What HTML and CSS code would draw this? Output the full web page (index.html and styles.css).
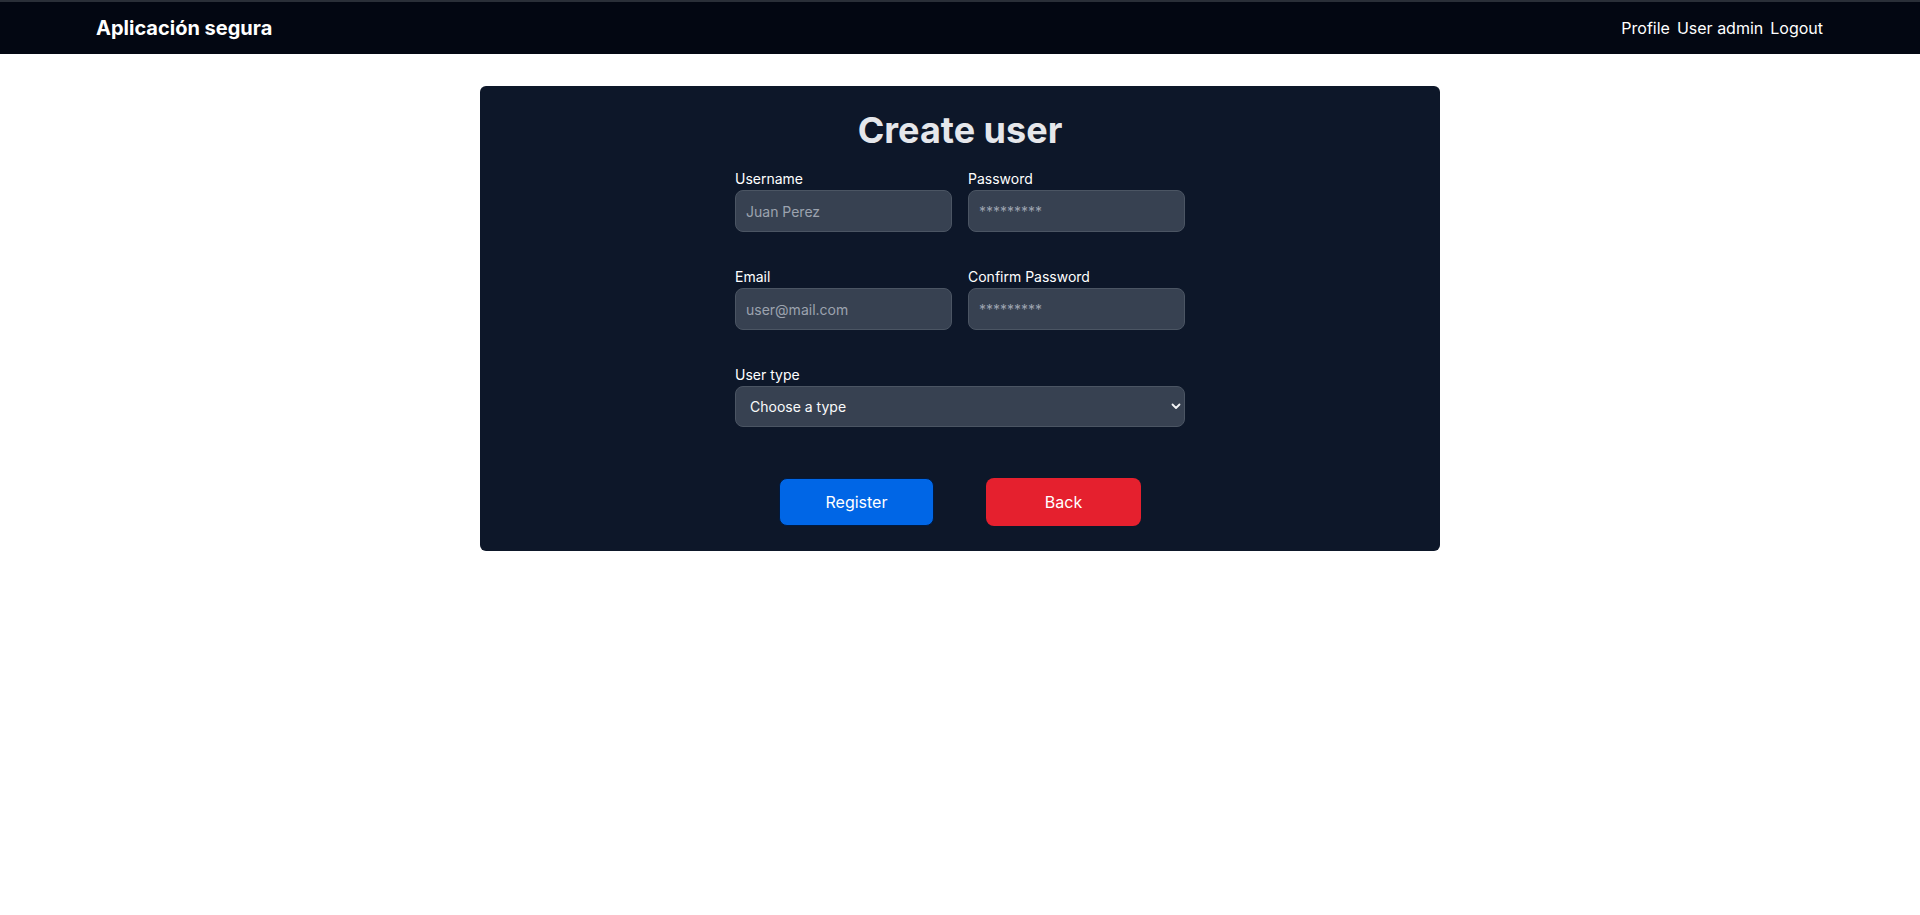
FILE: index.html
```html
<!DOCTYPE html>
<html lang="es">
<head>
<meta charset="utf-8">
<title>Create user</title>
<link rel="stylesheet" href="styles.css">
</head>
<body>
<nav class="navbar">
  <a class="brand" href="#">Aplicación segura</a>
  <div class="nav-links">
    <a href="#">Profile</a>
    <a href="#">User admin</a>
    <a href="#">Logout</a>
  </div>
</nav>
<main class="main">
  <section class="card">
    <h1 class="title">Create user</h1>
    <form class="form">
      <div class="grid">
        <div class="field">
          <label class="label">Username</label>
          <input class="input" type="text" placeholder="Juan Perez">
        </div>
        <div class="field">
          <label class="label">Password</label>
          <input class="input" type="password" placeholder="*********">
        </div>
        <div class="field">
          <label class="label">Email</label>
          <input class="input" type="email" placeholder="user@mail.com">
        </div>
        <div class="field">
          <label class="label">Confirm Password</label>
          <input class="input" type="password" placeholder="*********">
        </div>
        <div class="field full">
          <label class="label">User type</label>
          <div class="select-wrap">
            <select class="select">
              <option>Choose a type</option>
            </select>
            <svg class="chevron" width="10" height="8" viewBox="0 0 10 8"><path d="M1.5 2.5 L5 6 L8.5 2.5" fill="none" stroke="#f3f4f6" stroke-width="1.8" stroke-linecap="round" stroke-linejoin="round"/></svg>
          </div>
        </div>
      </div>
      <div class="actions">
        <button type="button" class="btn btn-blue">Register</button>
        <button type="button" class="btn btn-red">Back</button>
      </div>
    </form>
  </section>
</main>
</body>
</html>
```
FILE: styles.css
```css
* { box-sizing: border-box; }
html, body { margin: 0; padding: 0; }
body {
  font-family: Inter, "Liberation Sans", sans-serif;
  background: #ffffff;
  color: #ffffff;
}
.navbar {
  height: 54px;
  background: #030712;
  border-top: 2px solid #2a2f38;
  display: flex;
  align-items: center;
  justify-content: space-between;
  padding: 0 97px 0 96px;
}
.brand {
  color: #ffffff;
  text-decoration: none;
  font-weight: 700;
  font-size: 20px;
}
.nav-links {
  display: flex;
  gap: 7px;
}
.nav-links a {
  color: #ffffff;
  text-decoration: none;
  font-size: 16px;
}
.main {
  display: flex;
  justify-content: center;
  padding-top: 32px;
}
.card {
  width: 960px;
  background: #0d1729;
  border-radius: 6px;
  padding: 21px 0 25px;
  display: flex;
  flex-direction: column;
  align-items: center;
}
.title {
  margin: 0;
  font-size: 36px;
  line-height: 46px;
  font-weight: 700;
  color: #e5e7eb;
}
.form {
  width: 450px;
  margin-top: 16px;
}
.grid {
  display: grid;
  grid-template-columns: minmax(0, 1fr) minmax(0, 1fr);
  column-gap: 16px;
  row-gap: 35px;
}
.field { display: flex; flex-direction: column; min-width: 0; }
.full { grid-column: 1 / span 2; }
.label {
  font-size: 14px;
  line-height: 20px;
  margin-bottom: 1px;
  color: #ffffff;
}
.input, .select {
  width: 100%;
  height: 42px;
  background: #374151;
  border: 1px solid #4b5563;
  border-radius: 8px;
  color: #ffffff;
  font-family: inherit;
  font-size: 14px;
  padding: 0 10px;
  outline: none;
}
.input::placeholder { color: #9ca3af; }
.select-wrap { position: relative; }
.select {
  height: 41px;
  appearance: none;
  -webkit-appearance: none;
  padding: 0 14px;
  color: #f9fafb;
}
.chevron {
  position: absolute;
  right: 4px;
  top: 16px;
}
.actions {
  display: flex;
  justify-content: center;
  gap: 52px;
  margin-top: 51px;
}
.btn {
  width: 155px;
  height: 48px;
  border: none;
  border-radius: 8px;
  color: #ffffff;
  font-family: inherit;
  font-size: 16px;
  cursor: pointer;
}
.btn-blue { background: #0066e6; border: 1px solid #001a40; }
.btn-red { background: #e5202e; }
```
